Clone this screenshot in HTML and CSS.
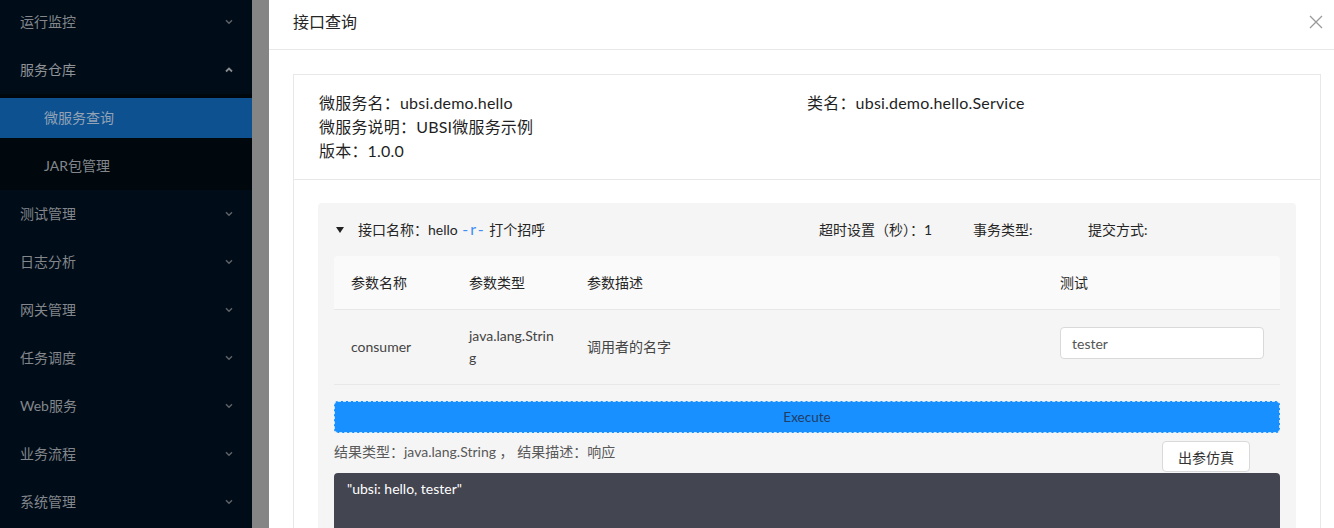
FILE: index.html
```html
<!DOCTYPE html>
<html lang="zh-CN">
<head>
<meta charset="utf-8">
<title>接口查询</title>
<link rel="stylesheet" href="styles.css">
</head>
<body>
<div class="app">
  <aside class="sider">
    <ul class="menu">
      <li class="menu-title"><span>运行监控</span><svg class="chev" width="8" height="6" viewBox="0 0 8 6"><path d="M1 1.2 L4 4.2 L7 1.2"/></svg></li>
      <li class="menu-title open"><span>服务仓库</span><svg class="chev up" width="8" height="6" viewBox="0 0 8 6"><path d="M1 4.5 L4 1.5 L7 4.5"/></svg></li>
      <li class="submenu">
        <div class="sub-item active">微服务查询</div>
        <div class="sub-item">JAR包管理</div>
      </li>
      <li class="menu-title"><span>测试管理</span><svg class="chev" width="8" height="6" viewBox="0 0 8 6"><path d="M1 1.2 L4 4.2 L7 1.2"/></svg></li>
      <li class="menu-title"><span>日志分析</span><svg class="chev" width="8" height="6" viewBox="0 0 8 6"><path d="M1 1.2 L4 4.2 L7 1.2"/></svg></li>
      <li class="menu-title"><span>网关管理</span><svg class="chev" width="8" height="6" viewBox="0 0 8 6"><path d="M1 1.2 L4 4.2 L7 1.2"/></svg></li>
      <li class="menu-title"><span>任务调度</span><svg class="chev" width="8" height="6" viewBox="0 0 8 6"><path d="M1 1.2 L4 4.2 L7 1.2"/></svg></li>
      <li class="menu-title"><span>Web服务</span><svg class="chev" width="8" height="6" viewBox="0 0 8 6"><path d="M1 1.2 L4 4.2 L7 1.2"/></svg></li>
      <li class="menu-title"><span>业务流程</span><svg class="chev" width="8" height="6" viewBox="0 0 8 6"><path d="M1 1.2 L4 4.2 L7 1.2"/></svg></li>
      <li class="menu-title"><span>系统管理</span><svg class="chev" width="8" height="6" viewBox="0 0 8 6"><path d="M1 1.2 L4 4.2 L7 1.2"/></svg></li>
    </ul>
  </aside>
  <div class="strip"></div>
  <section class="drawer">
    <header class="drawer-header">
      <span class="drawer-title">接口查询</span>
      <svg class="close" width="14" height="14" viewBox="0 0 14 14"><path d="M1 1 L13 13 M13 1 L1 13"/></svg>
    </header>
    <div class="drawer-body">
      <div class="card">
        <div class="info">
          <div class="info-col">
            <div>微服务名：ubsi.demo.hello</div>
            <div>微服务说明：UBSI微服务示例</div>
            <div>版本：1.0.0</div>
          </div>
          <div class="info-col">
            <div>类名：ubsi.demo.hello.Service</div>
          </div>
        </div>
        <div class="api-section">
          <div class="api-panel">
            <div class="api-head">
              <div class="api-title"><i class="caret"></i><span>接口名称：hello <span class="sep">-r-</span> 打个招呼</span></div>
              <div class="head-item w1">超时设置（秒）：1</div>
              <div class="head-item w2">事务类型:</div>
              <div class="head-item w3">提交方式:</div>
            </div>
            <table class="params">
              <colgroup><col class="c1"><col class="c2"><col class="c3"><col class="c4"></colgroup>
              <thead>
                <tr><th>参数名称</th><th>参数类型</th><th>参数描述</th><th>测试</th></tr>
              </thead>
              <tbody>
                <tr>
                  <td>consumer</td>
                  <td class="type">java.lang.String</td>
                  <td>调用者的名字</td>
                  <td><input class="test-input" type="text" value="tester"></td>
                </tr>
              </tbody>
            </table>
            <button class="execute" type="button">Execute</button>
            <div class="result-row">
              <span class="result-desc">结果类型：java.lang.String ， 结果描述：响应</span>
              <button class="mock-btn" type="button">出参仿真</button>
            </div>
            <div class="result-box">"ubsi: hello, tester"</div>
          </div>
        </div>
      </div>
    </div>
  </section>
</div>
</body>
</html>
```

FILE: styles.css
```css
* { box-sizing: border-box; }
html, body { margin: 0; padding: 0; }
body {
  width: 1334px;
  height: 528px;
  overflow: hidden;
  font-family: "Lato", "Noto Sans CJK SC", sans-serif;
  font-size: 14px;
  background: #fff;
}
.app { display: flex; height: 528px; }

/* sidebar */
.sider {
  width: 252px;
  flex: none;
  background: #000c17;
  color: #83878c;
  font-size: 14px;
  overflow: hidden;
}
.menu {
  list-style: none;
  margin: -2px 0 0;
  padding: 0;
  display: flex;
  flex-direction: column;
}
.menu-title {
  height: 40px;
  margin: 4px 0;
  padding: 0 19px 0 20px;
  display: flex;
  align-items: center;
  justify-content: space-between;
  line-height: 40px;
}
.menu-title.open { color: #8f9397; }
.chev path { fill: none; stroke: #5f6469; stroke-width: 1.4; }
.chev.up path { stroke: #8a8d90; stroke-width: 1.8; }
.submenu {
  background: #00070d;
  padding: 4px 0;
  display: flex;
  flex-direction: column;
  gap: 8px;
}
.sub-item {
  height: 40px;
  line-height: 40px;
  padding-left: 44px;
}
.sub-item.active { background: #0d5191; color: #93a3b4; }

.strip { width: 17px; flex: none; background: #858585; }

/* drawer */
.drawer {
  flex: 1;
  background: #fff;
  display: flex;
  flex-direction: column;
  min-width: 0;
}
.drawer-header {
  height: 50px;
  flex: none;
  border-bottom: 1px solid #e8e8e8;
  display: flex;
  align-items: center;
  justify-content: space-between;
  padding: 0 11px 5px 24px;
}
.drawer-title { font-size: 16px; line-height: 22px; color: #262626; }
.close path { stroke: #999; stroke-width: 1.3; fill: none; }

.drawer-body { padding: 24px 13px 0 24px; }
.card { border: 1px solid #e8e8e8; }

.info {
  display: flex;
  padding: 16px 25px;
  border-bottom: 1px solid #e8e8e8;
  font-size: 16px;
  line-height: 24px;
  letter-spacing: 0.2px;
  color: #1f1f1f;
}
.info-col { flex: 1; }

.api-section { padding: 23px 24px 0; }
.api-panel {
  background: #f5f5f5;
  border-radius: 4px;
  padding: 0 16px 40px;
}
.api-head {
  height: 53px;
  display: flex;
  align-items: center;
  font-size: 14px;
  line-height: 20px;
  color: #262626;
}
.api-title { flex: 1; display: flex; align-items: center; padding-left: 2px; }
.caret {
  width: 0; height: 0;
  border-left: 4px solid transparent;
  border-right: 4px solid transparent;
  border-top: 6px solid #222;
  margin-right: 14px;
}
.sep { color: #3f8ef5; font-size: 16px; letter-spacing: 2px; margin-left: 1px; }
.head-item.w1 { width: 154px; }
.head-item.w2 { width: 115px; }
.head-item.w3 { width: 192px; }

.params {
  width: 100%;
  border-collapse: collapse;
  table-layout: fixed;
  font-size: 14px;
  color: #262626;
}
.params col.c1 { width: 118px; }
.params col.c2 { width: 118px; }
.params col.c3 { width: 473px; }
.params col.c4 { width: 237px; }
.params th {
  background: #fafafa;
  text-align: left;
  font-weight: normal;
  padding: 16px 17px;
  line-height: 21px;
  border-bottom: 1px solid #e8e8e8;
}
.params thead th:first-child { border-top-left-radius: 4px; }
.params thead th:last-child { border-top-right-radius: 4px; }
.params td {
  padding: 15px 17px;
  line-height: 22px;
  border-bottom: 1px solid #e8e8e8;
  color: #444;
  vertical-align: middle;
}
.params td.type { word-break: break-all; padding-right: 12px; }
.test-input {
  width: 204px;
  height: 32px;
  border: 1px solid #d9d9d9;
  border-radius: 4px;
  background: #fff;
  padding: 0 11px;
  font-family: inherit;
  font-size: 14px;
  color: #555;
  margin-top: -8px;
  display: block;
}

.execute {
  display: block;
  width: 100%;
  height: 32px;
  margin-top: 16px;
  background: #1890ff;
  border: 1px dashed rgba(255,255,255,0.75);
  border-radius: 4px;
  color: #213d66;
  font-family: inherit;
  font-size: 13.5px;
  line-height: 20px;
  padding: 0;
}
.result-row {
  display: flex;
  justify-content: space-between;
  align-items: flex-start;
  margin-top: 8px;
}
.result-desc { line-height: 22px; color: #595959; font-size: 14px; }
.mock-btn {
  width: 88px;
  height: 31px;
  margin-right: 30px;
  background: #fff;
  border: 1px solid #d9d9d9;
  border-radius: 4px;
  font-family: inherit;
  font-size: 14px;
  color: #333;
  padding: 0;
}
.result-box {
  margin-top: 1px;
  height: 120px;
  background: #434550;
  border-radius: 4px 4px 0 0;
  color: #fff;
  font-size: 14px;
  line-height: 18px;
  padding: 7px 13px;
}
```
